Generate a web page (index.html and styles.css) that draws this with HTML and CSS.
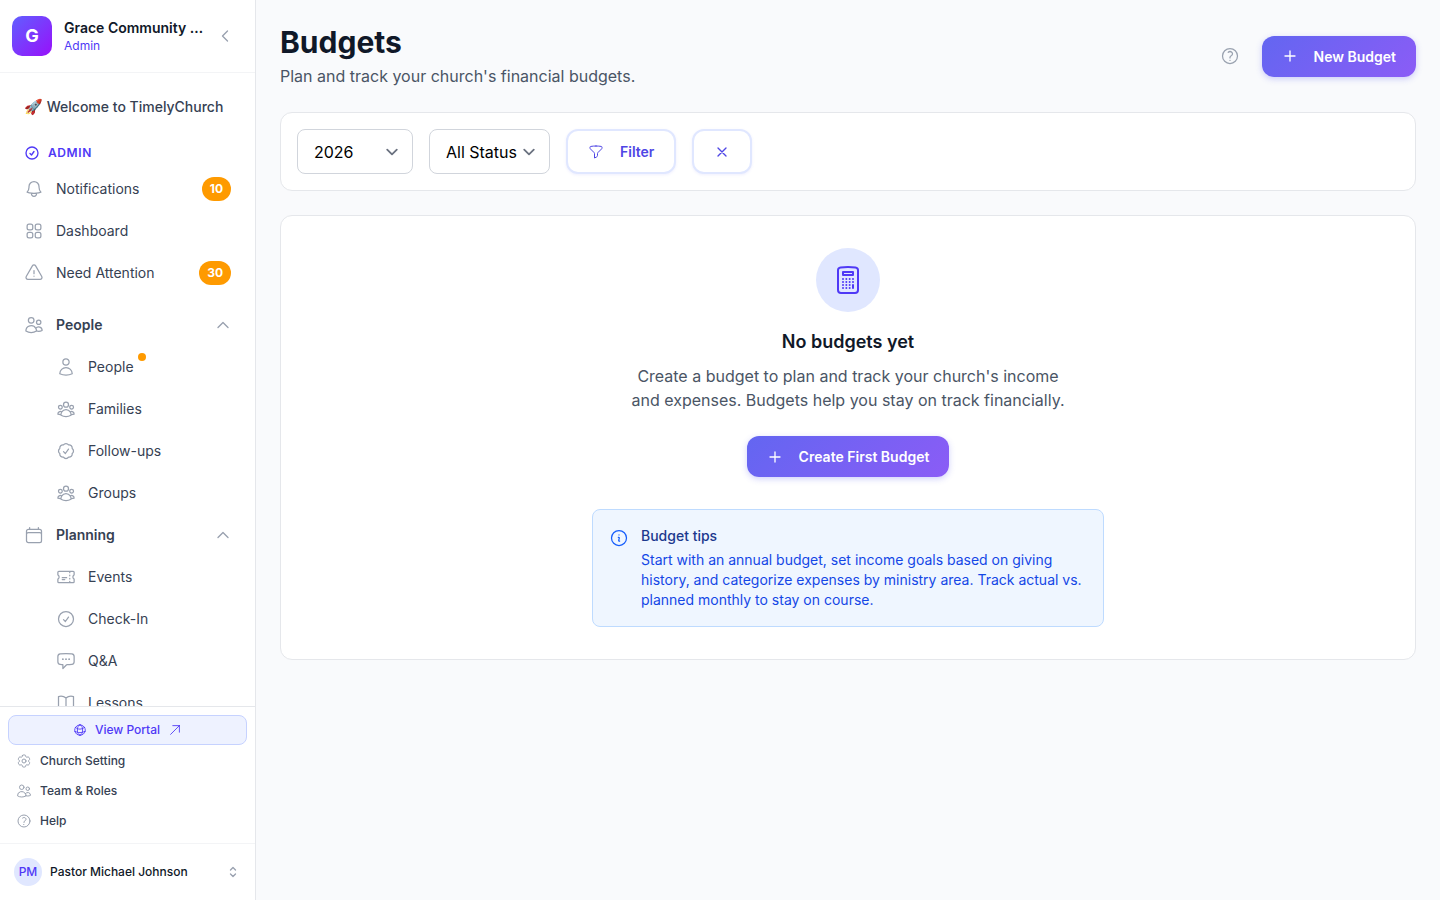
FILE: index.html
```html
<!DOCTYPE html>
<html lang="en">
  <head>
    <meta charset="UTF-8" />
    <meta name="viewport" content="width=device-width, initial-scale=1.0" />
    <title>Budgets</title>
    <link rel="stylesheet" href="styles.css">
  </head>
  <body>
    <!-- icons -->
    <svg class="sprite" aria-hidden="true">
      <symbol id="i-left" viewBox="0 0 24 24"><path d="M15.75 19.5 8.25 12l7.5-7.5" /></symbol>
      <symbol id="i-up" viewBox="0 0 24 24"><path d="m4.5 15.75 7.5-7.5 7.5 7.5" /></symbol>
      <symbol id="i-updown" viewBox="0 0 24 24"><path d="M8.25 15 12 18.75 15.75 15m-7.5-6L12 5.25 15.75 9" /></symbol>
      <symbol id="i-plus" viewBox="0 0 24 24"><path d="M12 4.5v15m7.5-7.5h-15" /></symbol>
      <symbol id="i-x" viewBox="0 0 24 24"><path d="M6 18 18 6M6 6l12 12" /></symbol>
      <symbol id="i-out" viewBox="0 0 24 24"><path d="m4.5 19.5 15-15m0 0H8.25m11.25 0v11.25" /></symbol>
      <symbol id="i-check" viewBox="0 0 24 24"><path d="M9 12.75 11.25 15 15 9.75M21 12a9 9 0 1 1-18 0 9 9 0 0 1 18 0Z" /></symbol>
      <symbol id="i-bell" viewBox="0 0 24 24"><path d="M14.857 17.082a23.848 23.848 0 0 0 5.454-1.31A8.967 8.967 0 0 1 18 9.75V9A6 6 0 0 0 6 9v.75a8.967 8.967 0 0 1-2.312 6.022c1.733.64 3.56 1.085 5.455 1.31m5.714 0a24.255 24.255 0 0 1-5.714 0m5.714 0a3 3 0 1 1-5.714 0" /></symbol>
      <symbol id="i-grid" viewBox="0 0 24 24">
        <rect x="3.75" y="3.75" width="6.75" height="6.75" rx="2.25" />
        <rect x="13.5" y="3.75" width="6.75" height="6.75" rx="2.25" />
        <rect x="3.75" y="13.5" width="6.75" height="6.75" rx="2.25" />
        <rect x="13.5" y="13.5" width="6.75" height="6.75" rx="2.25" />
      </symbol>
      <symbol id="i-warn" viewBox="0 0 24 24"><path d="M12 9v3.75m-9.303 3.376c-.866 1.5.217 3.374 1.948 3.374h14.71c1.73 0 2.813-1.874 1.948-3.374L13.949 3.378c-.866-1.5-3.032-1.5-3.898 0L2.697 16.126ZM12 15.75h.007v.008H12v-.008Z" /></symbol>
      <symbol id="i-users" viewBox="0 0 24 24"><path d="M15 19.128a9.38 9.38 0 0 0 2.625.372 9.337 9.337 0 0 0 4.121-.952 4.125 4.125 0 0 0-7.533-2.493M15 19.128v-.003c0-1.113-.285-2.16-.786-3.07M15 19.128v.106A12.318 12.318 0 0 1 8.624 21c-2.331 0-4.512-.645-6.374-1.766l-.001-.109a6.375 6.375 0 0 1 11.964-3.07M12 6.375a3.375 3.375 0 1 1-6.75 0 3.375 3.375 0 0 1 6.75 0Zm8.25 2.25a2.625 2.625 0 1 1-5.25 0 2.625 2.625 0 0 1 5.25 0Z" /></symbol>
      <symbol id="i-user" viewBox="0 0 24 24"><path d="M15.75 6a3.75 3.75 0 1 1-7.5 0 3.75 3.75 0 0 1 7.5 0ZM4.501 20.118a7.5 7.5 0 0 1 14.998 0A17.933 17.933 0 0 1 12 21.75c-2.676 0-5.216-.584-7.499-1.632Z" /></symbol>
      <symbol id="i-group" viewBox="0 0 24 24"><path d="M18 18.72a9.094 9.094 0 0 0 3.741-.479 3 3 0 0 0-4.682-2.72m.94 3.198.001.031c0 .225-.012.447-.037.666A11.944 11.944 0 0 1 12 21c-2.17 0-4.207-.576-5.963-1.584A6.062 6.062 0 0 1 6 18.719m12 0a5.971 5.971 0 0 0-.941-3.197m0 0A5.995 5.995 0 0 0 12 12.75a5.995 5.995 0 0 0-5.058 2.772m0 0a3 3 0 0 0-4.681 2.72 8.986 8.986 0 0 0 3.74.477m.94-3.197a5.971 5.971 0 0 0-.94 3.197M15 6.75a3 3 0 1 1-6 0 3 3 0 0 1 6 0Zm6 3a2.25 2.25 0 1 1-4.5 0 2.25 2.25 0 0 1 4.5 0Zm-13.5 0a2.25 2.25 0 1 1-4.5 0 2.25 2.25 0 0 1 4.5 0Z" /></symbol>
      <symbol id="i-badge" viewBox="0 0 24 24"><path d="M9 12.75 11.25 15 15 9.75M21 12c0 1.268-.63 2.39-1.593 3.068a3.745 3.745 0 0 1-1.043 3.296 3.745 3.745 0 0 1-3.296 1.043A3.745 3.745 0 0 1 12 21c-1.268 0-2.39-.63-3.068-1.593a3.746 3.746 0 0 1-3.296-1.043 3.745 3.745 0 0 1-1.043-3.296A3.745 3.745 0 0 1 3 12c0-1.268.63-2.39 1.593-3.068a3.745 3.745 0 0 1 1.043-3.296 3.746 3.746 0 0 1 3.296-1.043A3.746 3.746 0 0 1 12 3c1.268 0 2.39.63 3.068 1.593a3.746 3.746 0 0 1 3.296 1.043 3.746 3.746 0 0 1 1.043 3.296A3.745 3.745 0 0 1 21 12Z" /></symbol>
      <symbol id="i-calendar" viewBox="0 0 24 24"><path d="M6.75 3v2.25M17.25 3v2.25M3 18.75V7.5a2.25 2.25 0 0 1 2.25-2.25h13.5A2.25 2.25 0 0 1 21 7.5v11.25m-18 0A2.25 2.25 0 0 0 5.25 21h13.5A2.25 2.25 0 0 0 21 18.75m-18 0v-7.5A2.25 2.25 0 0 1 5.25 9h13.5A2.25 2.25 0 0 1 21 11.25v7.5" /></symbol>
      <symbol id="i-ticket" viewBox="0 0 24 24"><path d="M16.5 6v.75m0 3v.75m0 3v.75m0 3V18m-9-5.25h5.25M7.5 15h3M3.375 5.25c-.621 0-1.125.504-1.125 1.125v3.026a2.999 2.999 0 0 1 0 5.198v3.026c0 .621.504 1.125 1.125 1.125h17.25c.621 0 1.125-.504 1.125-1.125v-3.026a2.999 2.999 0 0 1 0-5.198V6.375c0-.621-.504-1.125-1.125-1.125H3.375Z" /></symbol>
      <symbol id="i-chat" viewBox="0 0 24 24"><path d="M8.625 9.75a.375.375 0 1 1-.75 0 .375.375 0 0 1 .75 0Zm0 0H8.25m4.125 0a.375.375 0 1 1-.75 0 .375.375 0 0 1 .75 0Zm0 0H12m4.125 0a.375.375 0 1 1-.75 0 .375.375 0 0 1 .75 0Zm0 0h-.375m-13.5 3.01c0 1.6 1.123 2.994 2.707 3.227 1.087.16 2.185.283 3.293.369V21l4.184-4.183a1.14 1.14 0 0 1 .778-.332 48.294 48.294 0 0 0 5.83-.498c1.585-.233 2.708-1.626 2.708-3.228V6.741c0-1.602-1.123-2.995-2.707-3.228A48.394 48.394 0 0 0 12 3c-2.392 0-4.744.175-7.043.513C3.373 3.746 2.25 5.14 2.25 6.741v6.018Z" /></symbol>
      <symbol id="i-book" viewBox="0 0 24 24"><path d="M12 6.042A8.967 8.967 0 0 0 6 3.75c-1.052 0-2.062.18-3 .512v14.25A8.987 8.987 0 0 1 6 18c2.305 0 4.408.867 6 2.292m0-14.25a8.966 8.966 0 0 1 6-2.292c1.052 0 2.062.18 3 .512v14.25A8.987 8.987 0 0 0 18 18a8.967 8.967 0 0 0-6 2.292m0-14.25v14.25" /></symbol>
      <symbol id="i-globe" viewBox="0 0 24 24"><path d="M12 21a9.004 9.004 0 0 0 8.716-6.747M12 21a9.004 9.004 0 0 1-8.716-6.747M12 21c2.485 0 4.5-4.03 4.5-9S14.485 3 12 3m0 18c-2.485 0-4.5-4.03-4.5-9S9.515 3 12 3m0 0a8.997 8.997 0 0 1 7.843 4.582M12 3a8.997 8.997 0 0 0-7.843 4.582m15.686 0A11.953 11.953 0 0 1 12 10.5c-2.998 0-5.74-1.1-7.843-2.918m15.686 0A8.959 8.959 0 0 1 21 12c0 .778-.099 1.533-.284 2.253m0 0A17.919 17.919 0 0 1 12 16.5c-3.162 0-6.133-.815-8.716-2.247m0 0A9.015 9.015 0 0 1 3 12c0-1.605.42-3.113 1.157-4.418" /></symbol>
      <symbol id="i-cog" viewBox="0 0 24 24"><path d="M9.594 3.94c.09-.542.56-.94 1.11-.94h2.593c.55 0 1.02.398 1.11.94l.213 1.281c.063.374.313.686.645.87.074.04.147.083.22.127.325.196.72.257 1.075.124l1.217-.456a1.125 1.125 0 0 1 1.37.49l1.296 2.247a1.125 1.125 0 0 1-.26 1.431l-1.003.827c-.293.241-.438.613-.43.992a7.723 7.723 0 0 1 0 .255c-.008.378.137.75.43.991l1.004.827c.424.35.534.955.26 1.43l-1.298 2.247a1.125 1.125 0 0 1-1.369.491l-1.217-.456c-.355-.133-.75-.072-1.076.124a6.47 6.47 0 0 1-.22.128c-.331.183-.581.495-.644.869l-.213 1.281c-.09.543-.56.94-1.11.94h-2.594c-.55 0-1.019-.398-1.11-.94l-.213-1.281c-.062-.374-.312-.686-.644-.87a6.52 6.52 0 0 1-.22-.127c-.325-.196-.72-.257-1.076-.124l-1.217.456a1.125 1.125 0 0 1-1.369-.49l-1.297-2.247a1.125 1.125 0 0 1 .26-1.431l1.004-.827c.292-.24.437-.613.43-.991a6.932 6.932 0 0 1 0-.255c.007-.38-.138-.751-.43-.992l-1.004-.827a1.125 1.125 0 0 1-.26-1.43l1.297-2.247a1.125 1.125 0 0 1 1.37-.491l1.216.456c.356.133.751.072 1.076-.124.072-.044.146-.086.22-.128.332-.183.582-.495.644-.869l.214-1.28Z" /><path d="M15 12a3 3 0 1 1-6 0 3 3 0 0 1 6 0Z" /></symbol>
      <symbol id="i-help" viewBox="0 0 24 24"><path d="M9.879 7.519c1.171-1.025 3.071-1.025 4.242 0 1.172 1.025 1.172 2.687 0 3.712-.203.179-.43.326-.67.442-.745.361-1.45.999-1.45 1.827v.75M21 12a9 9 0 1 1-18 0 9 9 0 0 1 18 0Zm-9 5.25h.008v.008H12v-.008Z" /></symbol>
      <symbol id="i-info" viewBox="0 0 24 24"><path d="m11.25 11.25.041-.02a.75.75 0 0 1 1.063.852l-.708 2.836a.75.75 0 0 0 1.063.853l.041-.021M21 12a9 9 0 1 1-18 0 9 9 0 0 1 18 0Zm-9-3.75h.008v.008H12V8.25Z" /></symbol>
      <symbol id="i-funnel" viewBox="0 0 24 24"><path d="M12 3c2.755 0 5.455.232 8.083.678.533.09.917.556.917 1.096v1.044a2.25 2.25 0 0 1-.659 1.591l-5.432 5.432a2.25 2.25 0 0 0-.659 1.591v2.927a2.25 2.25 0 0 1-1.244 2.013L9.75 21v-6.568a2.25 2.25 0 0 0-.659-1.591L3.659 7.409A2.25 2.25 0 0 1 3 5.818V4.774c0-.54.384-1.006.917-1.096A48.32 48.32 0 0 1 12 3Z" /></symbol>
      <symbol id="i-calc" viewBox="0 0 24 24"><path d="M15.75 15.75V18m-7.5-6.75h.008v.008H8.25v-.008Zm0 2.25h.008v.008H8.25V13.5Zm0 2.25h.008v.008H8.25v-.008Zm0 2.25h.008v.008H8.25V18Zm2.498-6.75h.007v.008h-.007v-.008Zm0 2.25h.007v.008h-.007V13.5Zm0 2.25h.007v.008h-.007v-.008Zm0 2.25h.007v.008h-.007V18Zm2.504-6.75h.008v.008h-.008v-.008Zm0 2.25h.008v.008h-.008V13.5Zm0 2.25h.008v.008h-.008v-.008Zm0 2.25h.008v.008h-.008V18Zm2.498-6.75h.008v.008h-.008v-.008Zm0 2.25h.008v.008h-.008V13.5ZM8.25 6h7.5v2.25h-7.5V6ZM12 2.25c-1.892 0-3.758.11-5.593.322C5.307 2.7 4.5 3.65 4.5 4.757V19.5a2.25 2.25 0 0 0 2.25 2.25h10.5a2.25 2.25 0 0 0 2.25-2.25V4.757c0-1.108-.806-2.057-1.907-2.185A48.507 48.507 0 0 0 12 2.25Z" /></symbol>
    </svg>

    <div class="app">
      <aside class="sidebar">
        <div class="brand">
          <span class="logo">G</span>
          <div class="brand-text">
            <div class="brand-name">Grace Community Church</div>
            <div class="brand-role">Admin</div>
          </div>
          <button type="button" class="collapse" aria-label="Collapse sidebar">
            <svg class="icon small bold"><use href="#i-left" /></svg>
          </button>
        </div>

        <nav class="nav">
          <a href="#" class="welcome"><span class="emoji">🚀</span> Welcome to TimelyChurch</a>
          <div class="section"><svg class="icon small bold"><use href="#i-check" /></svg>ADMIN</div>
          <a href="#" class="item"><svg class="icon"><use href="#i-bell" /></svg><span>Notifications</span><span class="count">10</span></a>
          <a href="#" class="item"><svg class="icon"><use href="#i-grid" /></svg><span>Dashboard</span></a>
          <a href="#" class="item"><svg class="icon"><use href="#i-warn" /></svg><span>Need Attention</span><span class="count">30</span></a>

          <div class="groups">
            <button type="button" class="item group"><svg class="icon"><use href="#i-users" /></svg><span>People</span><svg class="icon small bold arrow"><use href="#i-up" /></svg></button>
            <a href="#" class="item sub"><svg class="icon"><use href="#i-user" /></svg><span class="dotted">People<span class="dot"></span></span></a>
            <a href="#" class="item sub"><svg class="icon"><use href="#i-group" /></svg><span>Families</span></a>
            <a href="#" class="item sub"><svg class="icon"><use href="#i-badge" /></svg><span>Follow-ups</span></a>
            <a href="#" class="item sub"><svg class="icon"><use href="#i-group" /></svg><span>Groups</span></a>
            <button type="button" class="item group"><svg class="icon"><use href="#i-calendar" /></svg><span>Planning</span><svg class="icon small bold arrow"><use href="#i-up" /></svg></button>
            <a href="#" class="item sub"><svg class="icon"><use href="#i-ticket" /></svg><span>Events</span></a>
            <a href="#" class="item sub"><svg class="icon"><use href="#i-check" /></svg><span>Check-In</span></a>
            <a href="#" class="item sub"><svg class="icon"><use href="#i-chat" /></svg><span>Q&amp;A</span></a>
            <a href="#" class="item sub"><svg class="icon"><use href="#i-book" /></svg><span>Lessons</span></a>
          </div>
        </nav>

        <div class="links">
          <a href="#" class="portal"><svg class="icon tiny"><use href="#i-globe" /></svg>View Portal<svg class="icon tiny"><use href="#i-out" /></svg></a>
          <a href="#" class="link"><svg class="icon small"><use href="#i-cog" /></svg>Church Setting</a>
          <a href="#" class="link"><svg class="icon small"><use href="#i-users" /></svg>Team &amp; Roles</a>
          <a href="#" class="link"><svg class="icon small"><use href="#i-help" /></svg>Help</a>
        </div>

        <div class="account">
          <button type="button" class="user">
            <span class="avatar">PM</span>
            <span>Pastor Michael Johnson</span>
            <svg class="icon small bold arrow"><use href="#i-updown" /></svg>
          </button>
        </div>
      </aside>

      <main class="main">
        <header class="head">
          <div>
            <h1>Budgets</h1>
            <p>Plan and track your church's financial budgets.</p>
          </div>
          <div class="actions">
            <button type="button" class="help" aria-label="Help"><svg class="icon"><use href="#i-help" /></svg></button>
            <button type="button" class="btn primary"><svg class="icon small bold"><use href="#i-plus" /></svg>New Budget</button>
          </div>
        </header>

        <form class="card filters">
          <select class="year" name="year" aria-label="Year">
            <option>2026</option>
            <option>2025</option>
          </select>
          <select class="status" name="status" aria-label="Status">
            <option>All Status</option>
            <option>Draft</option>
            <option>Active</option>
          </select>
          <button type="button" class="btn outline"><svg class="icon small"><use href="#i-funnel" /></svg>Filter</button>
          <button type="reset" class="btn outline" aria-label="Clear"><svg class="icon small bold"><use href="#i-x" /></svg></button>
        </form>

        <section class="card empty">
          <div class="circle"><svg class="icon large"><use href="#i-calc" /></svg></div>
          <h2>No budgets yet</h2>
          <p class="desc">Create a budget to plan and track your church's income and expenses. Budgets help you stay on track financially.</p>
          <button type="button" class="btn primary"><svg class="icon small bold"><use href="#i-plus" /></svg>Create First Budget</button>
          <div class="tips">
            <svg class="icon"><use href="#i-info" /></svg>
            <div>
              <h3>Budget tips</h3>
              <p>Start with an annual budget, set income goals based on giving history, and categorize expenses by ministry area. Track actual vs. planned monthly to stay on course.</p>
            </div>
          </div>
        </section>
      </main>
    </div>
  </body>
</html>
```
FILE: styles.css
```css
* {
  box-sizing: border-box;
}
body {
  margin: 0;
  background-color: #f9fafc;
  color: #101828;
  font-family: Inter, "Liberation Sans", sans-serif;
  font-size: 16px;
  line-height: 24px;
}
h1,
h2,
h3,
p {
  margin: 0;
}
a {
  color: inherit;
  text-decoration: none;
}
button,
select {
  font-family: inherit;
  cursor: pointer;
}

/* icons */
.sprite {
  display: none;
}
.icon {
  flex: none;
  width: 20px;
  height: 20px;
  fill: none;
  stroke: currentColor;
  stroke-width: 1.5;
  stroke-linecap: round;
  stroke-linejoin: round;
}
.small {
  width: 16px;
  height: 16px;
}
.tiny {
  width: 14px;
  height: 14px;
}
.large {
  width: 32px;
  height: 32px;
}
.bold {
  stroke-width: 2;
}

.app {
  display: flex;
  height: 100vh;
}

/* sidebar */
.sidebar {
  flex: none;
  display: flex;
  flex-direction: column;
  width: 256px;
  background-color: white;
  border-right: solid 1px #e5e7eb;
}
.brand {
  display: flex;
  align-items: center;
  gap: 12px;
  padding: 16px 12px;
  border-bottom: solid 1px #f3f4f6;
}
.logo {
  display: flex;
  align-items: center;
  justify-content: center;
  width: 40px;
  height: 40px;
  border-radius: 10px;
  background: linear-gradient(135deg, #615fff, #9810fa);
  color: white;
  font-size: 18px;
  font-weight: 700;
}
.brand-text {
  flex: 1;
  min-width: 0;
}
.brand-name {
  overflow: hidden;
  white-space: nowrap;
  text-overflow: ellipsis;
  font-size: 14px;
  font-weight: 600;
  line-height: 20px;
}
.brand-role {
  color: #4f39f6;
  font-size: 12px;
  line-height: 16px;
}
.collapse {
  display: flex;
  margin-left: -12px;
  padding: 10px;
  border: none;
  background: none;
  color: #99a1af;
}

.nav {
  flex: 1;
  min-height: 0;
  overflow: hidden;
  display: flex;
  flex-direction: column;
  gap: 2px;
  padding: 16px 12px 0;
}
.welcome {
  padding: 8px 12px;
  color: #364153;
  font-size: 14px;
  font-weight: 500;
  line-height: 20px;
}
.emoji {
  font-size: 15px;
}
.section {
  display: flex;
  align-items: center;
  gap: 8px;
  padding: 18px 12px 6px;
  color: #4f39f6;
  font-size: 12px;
  font-weight: 600;
  line-height: 16px;
  letter-spacing: 0.05em;
}
.item {
  flex: none;
  display: flex;
  align-items: center;
  gap: 12px;
  height: 40px;
  padding: 0 12px;
  border: none;
  background: none;
  color: #364153;
  font-size: 14px;
  line-height: 20px;
}
.item .icon {
  color: #99a1af;
}
.groups {
  display: flex;
  flex-direction: column;
  gap: 2px;
  margin-top: 10px;
}
.group {
  font-weight: 600;
}
.sub {
  padding-left: 44px;
}
.arrow {
  margin-left: auto;
}
.count {
  margin-left: auto;
  padding: 4px 8px;
  border-radius: 12px;
  background-color: #fe9a00;
  color: white;
  font-size: 12px;
  font-weight: 700;
  line-height: 16px;
}
.dotted {
  position: relative;
}
.dot {
  position: absolute;
  top: -4px;
  right: -12px;
  width: 8px;
  height: 8px;
  border-radius: 50%;
  background-color: #fe9a00;
}

.links {
  display: flex;
  flex-direction: column;
  padding: 8px 8px 7px;
  border-top: solid 1px #e5e7eb;
  color: #364153;
  font-size: 12px;
  font-weight: 500;
  line-height: 16px;
}
.portal {
  display: flex;
  align-items: center;
  justify-content: center;
  gap: 8px;
  margin-bottom: 1px;
  padding: 6px 8px;
  border: solid 1px #c6d2ff;
  border-radius: 8px;
  background-color: #eef2ff;
  color: #4f39f6;
}
.link {
  display: flex;
  align-items: center;
  gap: 8px;
  padding: 7px 8px;
}
.link .icon {
  color: #99a1af;
}
.account {
  padding: 8px;
  border-top: solid 1px #f3f4f6;
}
.user {
  display: flex;
  align-items: center;
  gap: 8px;
  width: 100%;
  padding: 6px;
  border: none;
  background: none;
  color: #101828;
  font-size: 12px;
  font-weight: 500;
  line-height: 16px;
}
.user .icon {
  color: #99a1af;
}
.avatar {
  display: flex;
  align-items: center;
  justify-content: center;
  width: 28px;
  height: 28px;
  border-radius: 50%;
  background-color: #e0e7ff;
  color: #4f39f6;
}

/* page */
.main {
  flex: 1;
  display: flex;
  flex-direction: column;
  gap: 24px;
  min-width: 0;
  padding: 24px;
  overflow: auto;
}
.head {
  display: flex;
  align-items: center;
  justify-content: space-between;
}
h1 {
  margin-bottom: 4px;
  font-size: 30px;
  font-weight: 700;
  line-height: 36px;
}
.head p {
  color: #4a5565;
}
.actions {
  display: flex;
  align-items: center;
  gap: 12px;
}
.help {
  display: flex;
  padding: 10px;
  border: none;
  background: none;
  color: #99a1af;
}
.btn {
  display: flex;
  align-items: center;
  gap: 16px;
  padding: 10px 20px;
  border: none;
  border-radius: 12px;
  font-size: 14px;
  font-weight: 600;
  line-height: 21px;
}
.primary {
  background: linear-gradient(135deg, #6366f1, #8b5cf6);
  box-shadow: 0 2px 6px rgba(99, 102, 241, 0.3);
  color: white;
}
.outline {
  border: solid 2px #e0e7ff;
  background-color: white;
  box-shadow: 0 1px 3px rgba(99, 102, 241, 0.1);
  color: #4f46e5;
}
.card {
  border: solid 1px #e5e7eb;
  border-radius: 12px;
  background-color: white;
}
.filters {
  display: flex;
  gap: 16px;
  padding: 16px;
}
select {
  appearance: none;
  padding: 8px 16px;
  border: solid 1px #d1d5dc;
  border-radius: 8px;
  background: white url("data:image/svg+xml,%3Csvg xmlns='http://www.w3.org/2000/svg' fill='none' viewBox='0 0 20 20'%3E%3Cpath stroke='%236b7280' stroke-linecap='round' stroke-linejoin='round' stroke-width='1.5' d='M6 8l4 4 4-4'/%3E%3C/svg%3E") no-repeat right 8px center / 24px;
  color: black;
  font-size: 16px;
  line-height: 24px;
}
.year {
  width: 116px;
}
.status {
  width: 121px;
}

.empty {
  display: flex;
  flex-direction: column;
  align-items: center;
  padding: 32px;
}
.circle {
  display: flex;
  align-items: center;
  justify-content: center;
  width: 64px;
  height: 64px;
  border-radius: 50%;
  background-color: #e0e7ff;
  color: #4f39f6;
}
h2 {
  margin: 16px 0 8px;
  font-size: 18px;
  font-weight: 600;
  line-height: 28px;
}
.desc {
  max-width: 448px;
  margin-bottom: 24px;
  color: #4a5565;
  text-align: center;
}
.tips {
  display: flex;
  gap: 12px;
  max-width: 512px;
  margin-top: 32px;
  padding: 16px;
  border: solid 1px #bedbff;
  border-radius: 8px;
  background-color: #eff6ff;
  color: #1447e6;
  font-size: 14px;
  line-height: 20px;
}
.tips .icon {
  margin-top: 2px;
  color: #155dfc;
}
h3 {
  margin-bottom: 4px;
  color: #1c398e;
  font-size: 14px;
  font-weight: 500;
}
```
